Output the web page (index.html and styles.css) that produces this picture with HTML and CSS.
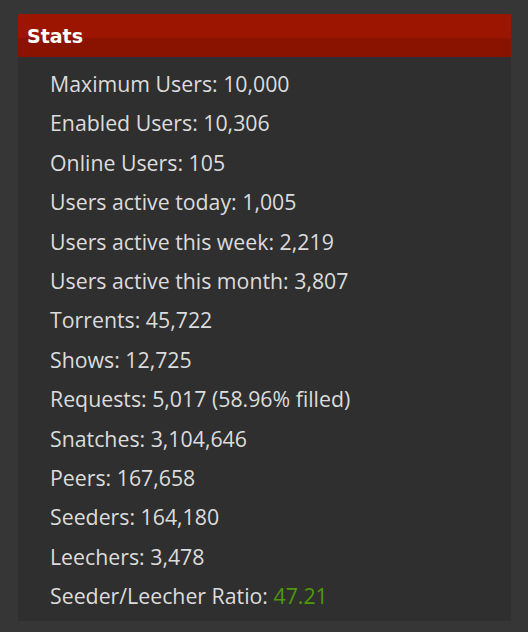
FILE: index.html
```html
<!DOCTYPE html>
<html lang="en">
<head>
    <meta charset="UTF-8">
    <meta name="viewport" content="width=device-width, initial-scale=1.0">
    <title>Stats</title>
    <link rel="stylesheet" href="styles.css">
</head>
<body>
    <div class="box">
        <div class="head">Stats</div>
        <ul class="stats">
            <li>Maximum Users: 10,000</li>
            <li>Enabled Users: 10,306</li>
            <li>Online Users: 105</li>
            <li>Users active today: 1,005</li>
            <li>Users active this week: 2,219</li>
            <li>Users active this month: 3,807</li>
            <li>Torrents: 45,722</li>
            <li>Shows: 12,725</li>
            <li>Requests: 5,017 (58.96% filled)</li>
            <li>Snatches: 3,104,646</li>
            <li>Peers: 167,658</li>
            <li>Seeders: 164,180</li>
            <li>Leechers: 3,478</li>
            <li>Seeder/Leecher Ratio: <span class="ratio">47.21</span></li>
        </ul>
    </div>
</body>
</html>
```

FILE: styles.css
```css
body {
    margin: 0;
    padding: 14px 17px 11px 18px;
    background-color: #363636;
    font-family: 'Open Sans', 'Noto Sans', sans-serif;
    color: #dcdcdc;
}
.box {
    background-color: #2f2f2f;
}
.head {
    height: 43px;
    line-height: 44px;
    padding-left: 9px;
    background: linear-gradient(#9c1500 0, #9c1500 24px, #8a1300 24px, #8a1300 100%);
    color: #fff;
    font-family: 'DejaVu Sans', Verdana, sans-serif;
    font-weight: bold;
    font-size: 19px;
}
.stats {
    list-style: none;
    margin: 0;
    padding: 7px 0 5px 32px;
}
.stats li {
    font-size: 21.3px;
    line-height: 39.4px;
}
.ratio {
    color: #4c9a06;
}
```
